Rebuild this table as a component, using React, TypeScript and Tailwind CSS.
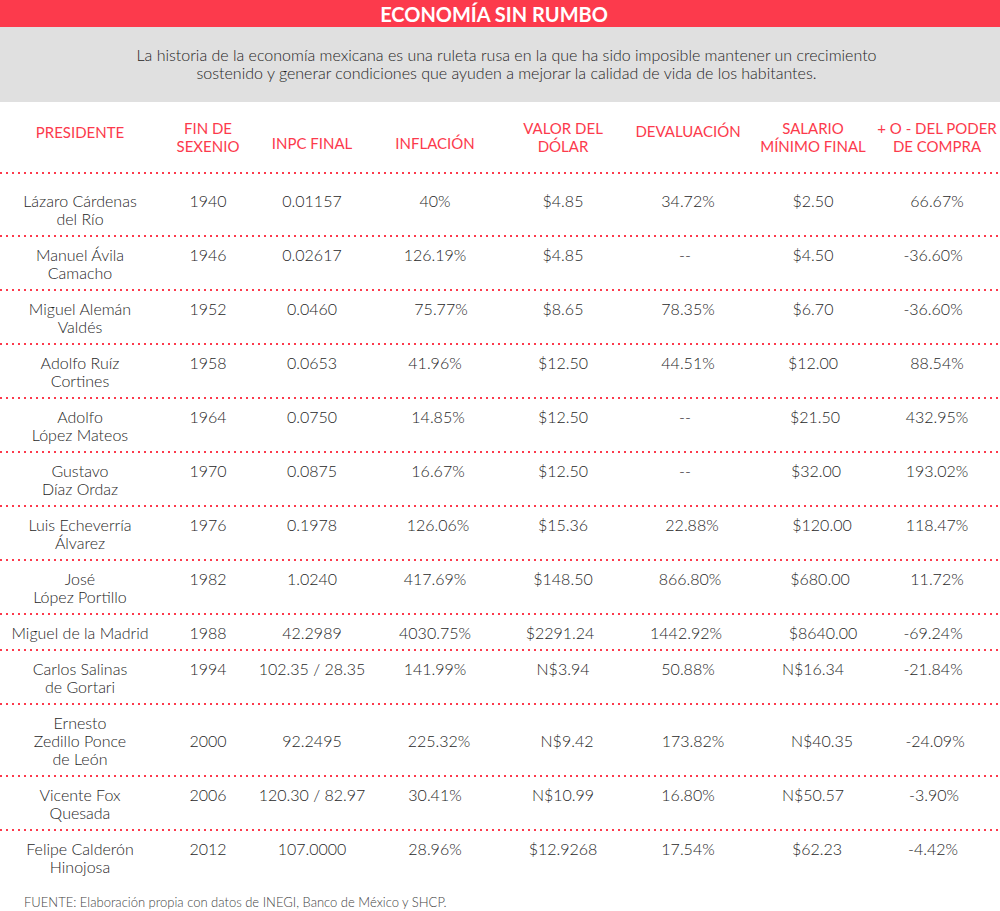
import React from "react";

type Cell = { v: string; c?: string };

type Row = {
  name: string[];
  vals: Cell[];
  center?: boolean;
  first?: boolean;
};

const c = (v: string, cls?: string): Cell => ({ v, c: cls });

const rows: Row[] = [
  {
    name: ["Lázaro Cárdenas", "del Río"],
    first: true,
    vals: [c("1940"), c("0.01157"), c("40%"), c("$4.85"), c("34.72%"), c("$2.50"), c("66.67%")],
  },
  {
    name: ["Manuel Ávila", "Camacho"],
    vals: [c("1946"), c("0.02617"), c("126.19%"), c("$4.85"), c("--", "pr-[6px]"), c("$4.50"), c("-36.60%", "pr-[8px]")],
  },
  {
    name: ["Miguel Alemán", "Valdés"],
    vals: [c("1952"), c("0.0460"), c("75.77%", "pl-[12px]"), c("$8.65"), c("78.35%"), c("$6.70"), c("-36.60%", "pr-[8px]")],
  },
  {
    name: ["Adolfo Ruíz", "Cortines"],
    vals: [c("1958"), c("0.0653"), c("41.96%"), c("$12.50"), c("44.51%"), c("$12.00"), c("88.54%")],
  },
  {
    name: ["Adolfo", "López Mateos"],
    vals: [c("1964"), c("0.0750"), c("14.85%", "pl-[6px]"), c("$12.50"), c("--", "pr-[6px]"), c("$21.50", "pl-[4px]"), c("432.95%")],
  },
  {
    name: ["Gustavo", "Díaz Ordaz"],
    vals: [c("1970"), c("0.0875"), c("16.67%", "pl-[6px]"), c("$12.50"), c("--", "pr-[6px]"), c("$32.00", "pl-[6px]"), c("193.02%")],
  },
  {
    name: ["Luis Echeverría", "Álvarez"],
    vals: [c("1976"), c("0.1978"), c("126.06%", "pl-[6px]"), c("$15.36"), c("22.88%", "pl-[8px]"), c("$120.00", "pl-[18px]"), c("118.47%")],
  },
  {
    name: ["José", "López Portillo"],
    vals: [c("1982"), c("1.0240"), c("417.69%"), c("$148.50"), c("866.80%", "pl-[4px]"), c("$680.00", "pl-[14px]"), c("11.72%")],
  },
  {
    name: ["Miguel de la Madrid"],
    vals: [c("1988"), c("42.2989"), c("4030.75%"), c("$2291.24", "pr-[6px]"), c("1442.92%", "pr-[4px]"), c("$8640.00", "pl-[20px]"), c("-69.24%", "pr-[8px]")],
  },
  {
    name: ["Carlos Salinas", "de Gortari"],
    vals: [c("1994"), c("102.35 / 28.35"), c("141.99%"), c("N$3.94"), c("50.88%"), c("N$16.34"), c("-21.84%", "pr-[8px]")],
  },
  {
    name: ["Ernesto", "Zedillo Ponce", "de León"],
    center: true,
    vals: [c("2000"), c("92.2495"), c("225.32%", "pl-[8px]"), c("N$9.42", "pl-[8px]"), c("173.82%", "pl-[10px]"), c("N$40.35", "pl-[18px]"), c("-24.09%", "pr-[4px]")],
  },
  {
    name: ["Vicente Fox", "Quesada"],
    vals: [c("2006"), c("120.30 / 82.97"), c("30.41%"), c("N$10.99"), c("16.80%"), c("N$50.57"), c("-3.90%", "pr-[6px]")],
  },
  {
    name: ["Felipe Calderón", "Hinojosa"],
    vals: [c("2012"), c("107.0000"), c("28.96%"), c("$12.9268"), c("17.54%"), c("$62.23", "pl-[8px]"), c("-4.42%", "pr-[8px]")],
  },
];

const grid =
  "grid grid-cols-[160px_96px_112px_134px_122px_128px_122px_126px]";

function Dots() {
  return (
    <div className="h-[2px] w-full bg-[repeating-linear-gradient(to_right,#fc3a4c_0px,#fc3a4c_2px,transparent_2px,transparent_6px)]" />
  );
}

export default function App() {
  return (
    <div className="w-[1000px] h-[911px] overflow-hidden bg-white font-['Lato',sans-serif] text-[#1f1f1f]">
      <div className="h-[27px] bg-[#fc3a4c] flex items-center justify-center pr-[12px]">
        <h1 className="text-white font-bold text-[20px] leading-none">
          ECONOMÍA SIN RUMBO
        </h1>
      </div>
      <div className="bg-[#e0e0e0] pt-[19px] pb-[20px] pl-[13px] text-center text-[16px] font-light leading-[18px] text-[#1f1f1f]">
        La historia de la economía mexicana es una ruleta rusa en la que ha sido imposible mantener un crecimiento
        <br />
        sostenido y generar condiciones que ayuden a mejorar la calidad de vida de los habitantes.
      </div>

      <div className={`${grid} items-start pt-[17px] pb-[17px] text-center text-[15px] font-normal leading-[18px] text-[#fc3a4c]`}>
        <div className="mt-[4px]">PRESIDENTE</div>
        <div>
          FIN DE
          <br />
          SEXENIO
        </div>
        <div className="mt-[15px]">INPC FINAL</div>
        <div className="mt-[15px]">INFLACIÓN</div>
        <div>
          VALOR DEL
          <br />
          DÓLAR
        </div>
        <div className="mt-[3px]">DEVALUACIÓN</div>
        <div>
          SALARIO
          <br />
          MÍNIMO FINAL
        </div>
        <div>
          + O - DEL PODER
          <br />
          DE COMPRA
        </div>
      </div>

      {rows.map((r, i) => (
        <div key={i}>
          <Dots />
          <div
            className={`${grid} ${r.center ? "items-center" : "items-start"} ${
              r.first ? "pt-[18px]" : "pt-[9px]"
            } pb-[7px] text-center text-[16px] font-light leading-[18px]`}
          >
            <div>
              {r.name.map((n, j) => (
                <div key={j}>{n}</div>
              ))}
            </div>
            {r.vals.map((v, j) => (
              <div key={j} className={v.c ?? ""}>
                {v.v}
              </div>
            ))}
          </div>
        </div>
      ))}

      <div className="mt-[10px] pl-[24px] text-[13px] font-light leading-[18px] text-[#444]">
        FUENTE: Elaboración propia con datos de INEGI, Banco de México y SHCP.
      </div>
    </div>
  );
}
